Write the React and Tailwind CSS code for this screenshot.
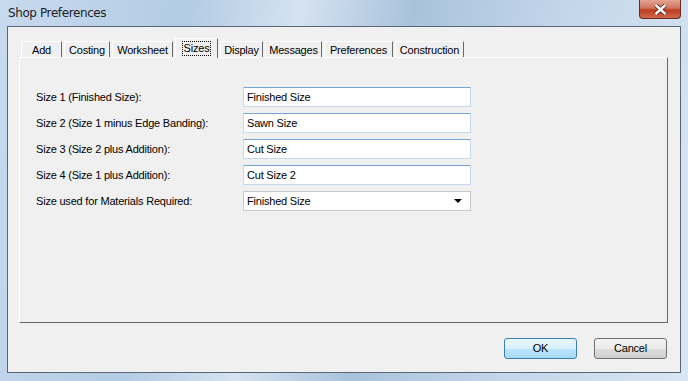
import React from "react";

const TABS = [
  { name: "Add", w: "w-[41px]" },
  { name: "Costing", w: "w-[46px]" },
  { name: "Worksheet", w: "w-[61px]" },
  { name: "Sizes", w: "w-[43px]", active: true },
  { name: "Display", w: "w-[43px]" },
  { name: "Messages", w: "w-[57px]" },
  { name: "Preferences", w: "w-[69px]" },
  { name: "Construction", w: "w-[69px]" },
];

const ROWS = [
  { label: "Size 1 (Finished Size):", value: "Finished Size" },
  { label: "Size 2 (Size 1 minus Edge Banding):", value: "Sawn Size" },
  { label: "Size 3 (Size 2 plus Addition):", value: "Cut Size" },
  { label: "Size 4 (Size 1 plus Addition):", value: "Cut Size 2" },
];

function Tab({ name, w, active }) {
  if (active) {
    return (
      <div className={"relative z-10 flex h-[20px] items-center justify-center self-end bg-[#f0f0f0] border border-b-0 border-l-white border-t-white border-r-[#696969] " + w}>
        <span className="border border-dotted border-black px-[1px] leading-[13px]">{name}</span>
      </div>
    );
  }
  return (
    <div className={"flex h-[17px] items-center justify-center bg-[#f0f0f0] border border-b-0 border-l-white border-t-white border-r-[#696969] " + w}>
      <span>{name}</span>
    </div>
  );
}

function Field({ children, dropdown }) {
  return (
    <div className={"flex h-[20px] w-[228px] items-center justify-between bg-white pl-[3px] pr-[8px] border " + (dropdown ? "border-[#c8c8c8]" : "border-[#abadb3] border-t-[#7aa7d2] border-l-[#c4d9ee] border-r-[#c4d9ee] border-b-[#c4d9ee]")}>
      <span>{children}</span>
      {dropdown && (
        <svg width="8" height="5" viewBox="0 0 8 5">
          <path d="M0 0 L8 0 L4 4 Z" fill="#000" />
        </svg>
      )}
    </div>
  );
}

function Button({ text, primary }) {
  return (
    <div className={"flex h-[21px] w-[73px] items-center justify-center rounded-[3px] border " + (primary ? "border-[#3c7fb1] bg-[linear-gradient(#eaf6fd_0%,#d9f0fc_50%,#bee6fd_51%,#a7d9f5_100%)]" : "border-[#707070] bg-[linear-gradient(#f2f2f2_0%,#ebebeb_50%,#dddddd_51%,#cfcfcf_100%)]")}>
      {text}
    </div>
  );
}

export default function App() {
  return (
    <div className="flex h-[381px] w-[688px] flex-col bg-[linear-gradient(100deg,#c7daee_0%,#b3cbe4_25%,#d5e3f1_40%,#a9c2dc_55%,#c3d6ea_75%,#d9e6f3_100%)] font-['Liberation_Sans',sans-serif] text-[11px] tracking-[-0.2px] text-black">
      {/* title bar */}
      <div className="flex h-[26px] shrink-0 items-start justify-between pl-[8px] pr-[7px]">
        <span className="pt-[6px] font-['DejaVu_Sans',sans-serif] text-[12px] leading-[14px] tracking-[-0.4px] text-[#1e1e1e]">Shop Preferences</span>
        <div className="flex h-[19px] w-[42px] items-center justify-center rounded-b-[4px] border border-t-0 border-[#6d2a1c] bg-[linear-gradient(#e5a391_0%,#d1745f_45%,#bd3c1f_55%,#cf6a4e_100%)]">
          <svg width="13" height="11" viewBox="0 0 13 11">
            <path d="M1.5 1 L11.5 10 M11.5 1 L1.5 10" stroke="#4a1b12" strokeWidth="4" />
            <path d="M1.5 1 L11.5 10 M11.5 1 L1.5 10" stroke="#ffffff" strokeWidth="2.4" />
          </svg>
        </div>
      </div>

      {/* client area */}
      <div className="mx-[7px] mb-[8px] flex flex-1 flex-col border border-[#5a6676] bg-[#f0f0f0]">
        <div className="ml-[11px] mr-[12px] mt-[11px] flex flex-col">
          {/* tab strip */}
          <div className="flex h-[20px] items-end gap-[2px] pl-[2px]">
            {TABS.map((t, i) => (
              <Tab key={i} {...t} />
            ))}
          </div>
          {/* panel */}
          <div className="-mt-[1px] flex h-[266px] flex-col gap-[6px] border border-l-white border-t-white border-r-[#696969] border-b-[#696969] pl-[16px] pt-[29px]">
            {ROWS.map((r, i) => (
              <div key={i} className="flex h-[20px] items-center">
                <span className="w-[207px]">{r.label}</span>
                <Field>{r.value}</Field>
              </div>
            ))}
            <div className="flex h-[20px] items-center">
              <span className="w-[207px]">Size used for Materials Required:</span>
              <Field dropdown>Finished Size</Field>
            </div>
          </div>
        </div>
        {/* buttons */}
        <div className="mt-[15px] flex justify-end gap-[17px] pr-[13px]">
          <Button text="OK" primary />
          <Button text="Cancel" />
        </div>
      </div>
    </div>
  );
}
